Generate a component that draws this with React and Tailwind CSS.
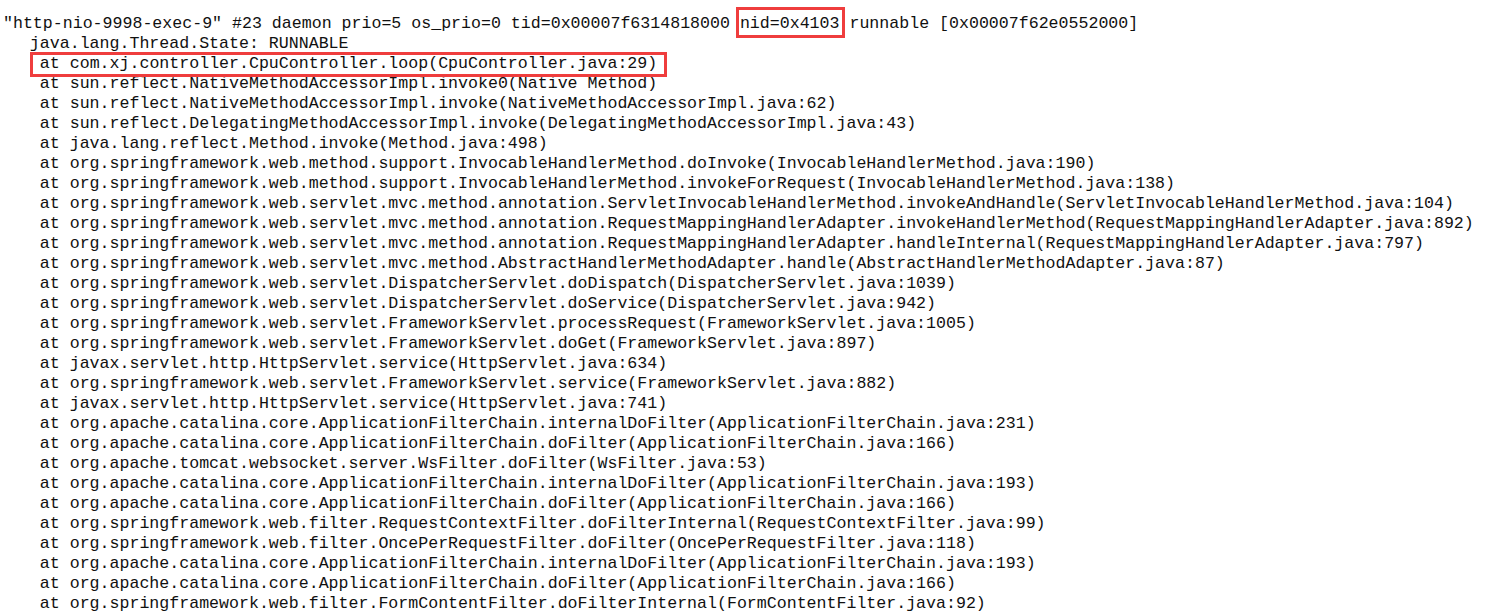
import React from 'react';

const frames = [
  'sun.reflect.NativeMethodAccessorImpl.invoke0(Native Method)',
  'sun.reflect.NativeMethodAccessorImpl.invoke(NativeMethodAccessorImpl.java:62)',
  'sun.reflect.DelegatingMethodAccessorImpl.invoke(DelegatingMethodAccessorImpl.java:43)',
  'java.lang.reflect.Method.invoke(Method.java:498)',
  'org.springframework.web.method.support.InvocableHandlerMethod.doInvoke(InvocableHandlerMethod.java:190)',
  'org.springframework.web.method.support.InvocableHandlerMethod.invokeForRequest(InvocableHandlerMethod.java:138)',
  'org.springframework.web.servlet.mvc.method.annotation.ServletInvocableHandlerMethod.invokeAndHandle(ServletInvocableHandlerMethod.java:104)',
  'org.springframework.web.servlet.mvc.method.annotation.RequestMappingHandlerAdapter.invokeHandlerMethod(RequestMappingHandlerAdapter.java:892)',
  'org.springframework.web.servlet.mvc.method.annotation.RequestMappingHandlerAdapter.handleInternal(RequestMappingHandlerAdapter.java:797)',
  'org.springframework.web.servlet.mvc.method.AbstractHandlerMethodAdapter.handle(AbstractHandlerMethodAdapter.java:87)',
  'org.springframework.web.servlet.DispatcherServlet.doDispatch(DispatcherServlet.java:1039)',
  'org.springframework.web.servlet.DispatcherServlet.doService(DispatcherServlet.java:942)',
  'org.springframework.web.servlet.FrameworkServlet.processRequest(FrameworkServlet.java:1005)',
  'org.springframework.web.servlet.FrameworkServlet.doGet(FrameworkServlet.java:897)',
  'javax.servlet.http.HttpServlet.service(HttpServlet.java:634)',
  'org.springframework.web.servlet.FrameworkServlet.service(FrameworkServlet.java:882)',
  'javax.servlet.http.HttpServlet.service(HttpServlet.java:741)',
  'org.apache.catalina.core.ApplicationFilterChain.internalDoFilter(ApplicationFilterChain.java:231)',
  'org.apache.catalina.core.ApplicationFilterChain.doFilter(ApplicationFilterChain.java:166)',
  'org.apache.tomcat.websocket.server.WsFilter.doFilter(WsFilter.java:53)',
  'org.apache.catalina.core.ApplicationFilterChain.internalDoFilter(ApplicationFilterChain.java:193)',
  'org.apache.catalina.core.ApplicationFilterChain.doFilter(ApplicationFilterChain.java:166)',
  'org.springframework.web.filter.RequestContextFilter.doFilterInternal(RequestContextFilter.java:99)',
  'org.springframework.web.filter.OncePerRequestFilter.doFilter(OncePerRequestFilter.java:118)',
  'org.apache.catalina.core.ApplicationFilterChain.internalDoFilter(ApplicationFilterChain.java:193)',
  'org.apache.catalina.core.ApplicationFilterChain.doFilter(ApplicationFilterChain.java:166)',
  'org.springframework.web.filter.FormContentFilter.doFilterInternal(FormContentFilter.java:92)',
];

export default function App() {
  return (
    <div className="w-[1493px] h-[611px] overflow-hidden bg-white pt-[14px] text-[#111] text-[16.6px] leading-[20px] whitespace-pre font-['Liberation_Mono','Courier_New',monospace]">
      {/* thread header */}
      <div className="pl-[3px]">
        {'"http-nio-9998-exec-9" #23 daemon prio=5 os_prio=0 tid=0x00007f6314818000 '}
        <span className="relative">
          nid=0x4103
          <span className="absolute -left-[4px] -right-[6px] -top-[7px] -bottom-[5px] border-[3px] border-[#ef3d3d]" />
        </span>
        {' runnable [0x00007f62e0552000]'}
      </div>
      <div>{'   java.lang.Thread.State: RUNNABLE'}</div>
      <div>
        {'    '}
        <span className="relative">
          at com.xj.controller.CpuController.loop(CpuController.java:29)
          <span className="absolute -left-[10px] -right-[10px] -top-[2px] -bottom-[4px] border-[3px] border-[#ef3d3d]" />
        </span>
      </div>
      {frames.map((f, i) => (
        <div key={i}>{'    at ' + f}</div>
      ))}
    </div>
  );
}
